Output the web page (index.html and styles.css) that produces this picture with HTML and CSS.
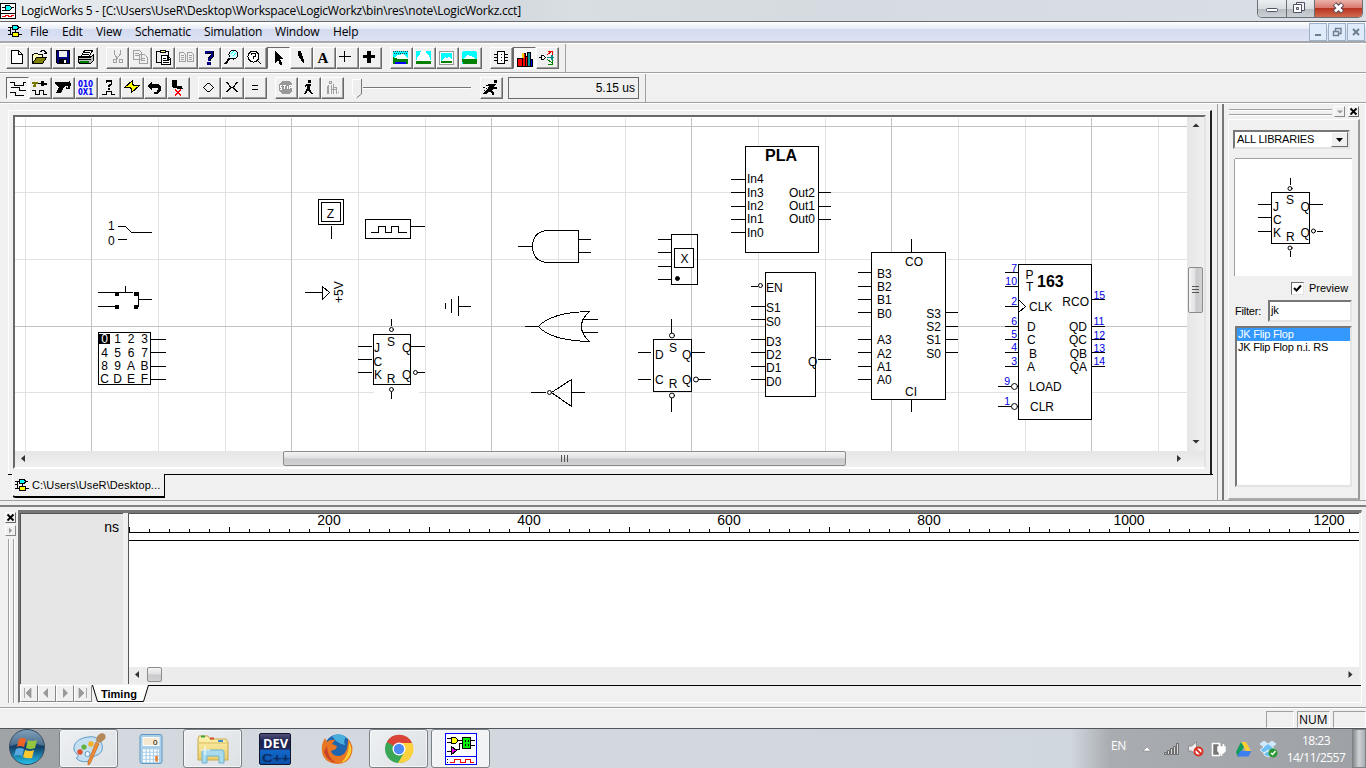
FILE: index.html
```html
<!DOCTYPE html>
<html lang="en">
<head>
<meta charset="utf-8">
<title>LogicWorks 5</title>
<link rel="stylesheet" href="styles.css">
</head>
<body>
<svg class="defs" width="0" height="0">
  <defs>
    <symbol id="gates" viewBox="0 0 14 14">
      <path d="M0 3.500h4M10 3.500h3M0 6.500h3M0 10.500h4M11 10.500h3M2.500 3v8M7.500 6v2" stroke="#000" fill="none"/>
      <path d="M4.500 1.500h4l2 1v2l-2 1h-4z" fill="#0ff" stroke="#000"/>
      <path d="M4.500 8.500h6v4h-6z" fill="#ff0" stroke="#000"/>
    </symbol>
    <linearGradient id="orb" x1="0" y1="0" x2="0" y2="1"><stop offset="0" stop-color="#5c87a8"/><stop offset=".5" stop-color="#123f68"/><stop offset="1" stop-color="#25c5ef"/></linearGradient>
    <linearGradient id="dev" x1="0" y1="0" x2="0" y2="1"><stop offset="0" stop-color="#55557c"/><stop offset=".25" stop-color="#1c2050"/><stop offset=".5" stop-color="#20265a"/><stop offset=".55" stop-color="#1268c8"/><stop offset="1" stop-color="#0a4fa8"/></linearGradient>
    <linearGradient id="folder" x1="0" y1="0" x2="0" y2="1"><stop offset="0" stop-color="#fff3b4"/><stop offset="1" stop-color="#e8cc66"/></linearGradient>
  </defs>
</svg>

<header class="titlebar">
  <svg class="appicon" width="16" height="16" shape-rendering="crispEdges"><path d="M.5.500h15v15h-15z" fill="#fff" stroke="#000"/><path d="M0 10.500h16M2 4.500h12M2 7.500h4" stroke="#000"/><path d="M5.500 2.500h4l2 2v1l-2 2h-4z" fill="#0ff" stroke="#000"/><path d="M2 13.500h3v-1h3v1h3v-1h3" stroke="#e00" fill="none"/></svg>
  <span class="caption">LogicWorks 5 - [C:\Users\UseR\Desktop\Workspace\LogicWorkz\bin\res\note\LogicWorkz.cct]</span>
  <div class="winbtns">
    <span class="wb wmin"><svg width="28" height="16"><rect x="8.500" y="8.500" width="11" height="3" rx="1" fill="#fff" stroke="#4d5265"/></svg></span>
    <span class="wb wmax"><svg width="27" height="16"><path d="M9.500 2.500h8v8h-8z" fill="#f4f4f6" stroke="#4d5265"/><path d="M6.500 4.500h8v8h-8z" fill="#fff" stroke="#4d5265"/><path d="M9.500 7.500h2v2h-2z" fill="#ddd" stroke="#4d5265"/></svg></span>
    <span class="wb wclose"><svg width="47" height="16"><path d="M19.500 4l8 8M27.500 4l-8 8" stroke="#5d4a58" stroke-width="5"/><path d="M20 4.500l7 7M27 4.500l-7 7" stroke="#fff" stroke-width="2.800"/></svg></span>
  </div>
</header>

<nav class="menubar">
  <svg class="mdi" width="14" height="14" shape-rendering="crispEdges"><use href="#gates"/></svg>
  <span class="m1">File</span><span class="m2">Edit</span><span class="m3">View</span><span class="m4">Schematic</span><span class="m5">Simulation</span><span class="m6">Window</span><span class="m7">Help</span>
  <div class="mdibtns">
    <span><svg width="16" height="16"><path d="M5 11h6" stroke="#6f7f92" stroke-width="2"/></svg></span>
    <span><svg width="16" height="16"><path d="M6.500 7v-2.500h5.500v5h-2M4.500 7.500h5v4h-5zM4 7.500h6M6 4.500h6" fill="none" stroke="#6f7f92" stroke-width="1.400"/></svg></span>
    <span><svg width="16" height="16"><path d="M5 5l6 6M11 5l-6 6" stroke="#6f7f92" stroke-width="2"/></svg></span>
  </div>
</nav>

<div class="toolrow">
  <div class="tools t1">
    <div class="grp">
      <span class="b"><svg><path d="M5.500 3.500h7l4 4v9h-11zM12.500 3.500v4h4" fill="#fff" stroke="#000"/></svg></span>
      <span class="b"><svg><path d="M3.500 16.500v-9h1l1-1h3l1 1h4v3" fill="#ffb" stroke="#000"/><path d="M3.500 16.500l4-6h10l-4 6z" fill="#808000" stroke="#000"/><path d="M11 4.500h1l1-1h2l2 2v1M15 6.500h3" fill="none" stroke="#000"/></svg></span>
      <span class="b"><svg><path d="M4.500 3.500h13v13h-12l-1-1z" fill="#000080" stroke="#000"/><path d="M7 4h8v6h-8z" fill="#eee"/><path d="M7 12h8v4h-8z" fill="#000"/><path d="M12 13h2v3h-2z" fill="#fff"/></svg></span>
      <span class="b"><svg><path d="M6.500 9l3-5.500h8l-3 5.500z" fill="#fff" stroke="#000"/><path d="M3.500 9.500h13l2-2v6l-3 3h-11l-1-2z" fill="#bbb" stroke="#000"/><path d="M3 12.500h13M9 5.500h6M8 7.500h6M4 10.500h12" stroke="#000"/><path d="M5 14.500h9" stroke="#008000" stroke-width="2"/></svg></span>
    </div>
    <div class="grp">
      <span class="b"><svg class="dis"><path d="M8.500 3v4l3 5M14.500 3v4l-4 5M7 12.500h3v3h-3zM13 12.500h3v3h-3z"/></svg></span>
      <span class="b"><svg class="dis"><path d="M4.500 3.500h6l2 2v7h-8zM10.500 7.500h5l3 3v6h-8zM6 6.500h4M6 8.500h4M12 11.500h4M12 13.500h4"/></svg></span>
      <span class="b"><svg><path d="M4.500 4.500h12v11h-12z" fill="#eee" stroke="#000"/><path d="M8 5.500v-2h5v2z" fill="#ff8" stroke="#000"/><path d="M9.500 8.500h6l3 3v6h-9zM15 9v3h3M11 11.500h3M11 13.500h6M11 15.500h6" fill="#fff" stroke="#000"/></svg></span>
      <span class="b"><svg class="dis"><path d="M4.500 5.500h4l2 2v7h-6zM12.500 5.500h4l2 2v7h-6zM6 8.500h3M6 10.500h3M6 12.500h3M14 8.500h3M14 10.500h3M14 12.500h3"/></svg></span>
      <span class="b"><svg><path d="M8 7v-2h6v4l-3 3v2" fill="none" stroke="#000" stroke-width="3"/><path d="M8 7v-2h6v4l-3 3v2" fill="none" stroke="#000080" stroke-width="1.500"/><path d="M9 15h4v3h-4z" fill="#000080"/></svg></span>
      <span class="b"><svg><circle cx="12.500" cy="7.500" r="4.500" fill="#cff" stroke="#000"/><path d="M10 7l3-3M12 9l3-3" stroke="#0ff"/><path d="M9 11l-5 6" stroke="#000" stroke-width="2"/></svg></span>
      <span class="b"><svg><circle cx="9.500" cy="9.500" r="5.500" fill="#fff" stroke="#000"/><path d="M7.500 8v-2h4v3l-2 1v2M13 13l4 4M10 14v1" fill="none" stroke="#000"/></svg></span>
      <span class="b on"><svg><path d="M8 4v12l3-3 2 5h2v-2l-2-4h4z"/></svg></span>
      <span class="b"><svg><path d="M8 4h3l3 9v4l-3-4-3-5z"/></svg></span>
      <span class="b"><svg><text x="4.500" y="16" class="aser">A</text></svg></span>
      <span class="b"><svg><path d="M3 9.500h12M8.500 4v11" stroke="#000"/></svg></span>
      <span class="b"><svg><path d="M4 9.500h12M10 4v12" stroke="#000" stroke-width="3.500"/></svg></span>
    </div>
    <div class="grp">
      <span class="b"><svg><path d="M4 4h14v10h-15v-8z" fill="#0ff"/><path d="M3 4.500h15M4 6.500h13" stroke="#345" stroke-dasharray="1 1"/><path d="M4 11l4-3 5-1 5 4v3h-14z" fill="#fff"/><path d="M3 10l5 2h10v5h-15z" fill="#008000"/><path d="M5 15h11v1.500h-11z" fill="#00f"/></svg></span>
      <span class="b"><svg><path d="M3 4h15v13h-15z" fill="#fff"/><path d="M3 4h5l-1 3-2 2-2 5zM13 4h5v10l-2-6-3-2z" fill="#0ff"/><path d="M3 14h15v3h-15z" fill="#008000"/><path d="M6 9h8l2 5h-12z" fill="#fff"/></svg></span>
      <span class="b"><svg><path d="M3.500 4.500h14v13h-14z" fill="#fff" stroke="#999"/><path d="M5 6h11v8h-11z" fill="#0ff"/><path d="M6 13l3-3 2 1 2-1 3 2v3h-11z" fill="#fff"/><path d="M5 14h11v2h-11z" fill="#008000"/></svg></span>
      <span class="b"><svg><path d="M3 5l2-1h11l2 2v11h-15z" fill="#0ff"/><path d="M4 12l5-4 5 2 3 3h-13z" fill="#fff"/><path d="M3 12h15v5h-14z" fill="#008000"/></svg></span>
    </div>
    <div class="grp">
      <span class="b"><svg><path d="M7.500 4.500h7v12h-7zM4 7.500h3M4 10.500h3M4 13.500h3M15 7.500h3M15 10.500h3M15 13.500h3" fill="#fff" stroke="#000"/><path d="M11.500 7v8" stroke="#000" stroke-dasharray="1 2"/></svg></span>
      <span class="b on"><svg><path d="M4 11h5v8h-5zM9 6h3v13h-3z" fill="#f00" stroke="#000"/><path d="M12.500 9h2v10h-2z" fill="#f00" stroke="#000"/><path d="M9 6h2v5h-2z" fill="#fc0"/><path d="M14 5h3v14h-3z" fill="#099" stroke="#000"/><path d="M17 12h2v7h-2z" fill="#00f" stroke="#000"/></svg></span>
      <span class="b"><svg><path d="M3 10.500h2M5.500 8.500h2l2 2-2 2h-2z" fill="#fff" stroke="#000"/><path d="M11 8l5-4M12 4.500h4v3" stroke="#e00" fill="none"/><path d="M11 10.500h7M16 8v5" stroke="#088" stroke-width="1.500"/><path d="M11 12l5 4M16 13v4h-4" stroke="#080" fill="none"/></svg></span>
    </div>
  </div>
</div>
<div class="toolrow">
  <div class="tools t2">
    <div class="grp">
      <span class="b on"><svg><path d="M4 5.500h4v3h9v-3h3M5 10.500h8v3h7M4 15.500h5v3h9" stroke="#000" fill="none"/></svg></span>
      <span class="b"><svg><path d="M3 5.500h6M5.500 5v4M4 8.500h3" stroke="#770" stroke-width="2"/><path d="M9 6.500h4M3 13.500h3v4h4v-4h4v4h4" stroke="#000" fill="none"/><path d="M12 4h3v2h3v2h-3v1h-3z"/></svg></span>
      <span class="b"><svg><path d="M3 5h12l3-1 1 3v2h-1v3h-4v-3l-2 1-3 6h-5l3-6-4-3z"/><path d="M13 9.500h3M15.500 9v2" stroke="#fff" stroke-width=".8"/></svg></span>
      <span class="b"><svg class="bits"><text x="3" y="10" textLength="15" lengthAdjust="spacingAndGlyphs">010</text><text x="3" y="18" textLength="15" lengthAdjust="spacingAndGlyphs">0X1</text></svg></span>
      <span class="b"><svg><path d="M8.500 6v-2h5v3l-2.500 2v1M11 11v2" fill="none" stroke="#000" stroke-width="1.700"/><path d="M4 17.500h4v-3h5v3h4" fill="none" stroke="#000"/></svg></span>
      <span class="b"><svg><path d="M11.500 3.500l-8 7h5l2 1v4l8-7h-5l-2-1z" fill="#ff0" stroke="#000"/></svg></span>
      <span class="b"><svg><path d="M8 4v3h6l3 3v3l-3 4h-4v-2h3l1-3-1-1h-5v3l-5-5z"/></svg></span>
      <span class="b"><svg><path d="M5 3h5v6h5l1 3h-4l-5-1-2-1z"/><path d="M8 13l6 5M14 13l-6 5" stroke="#f00" stroke-width="1.500"/></svg></span>
    </div>
    <div class="grp">
      <span class="b"><svg><path d="M5.500 10.500l4-4h2l4 4-4 4h-2z" fill="none" stroke="#000" stroke-width="1.300"/></svg></span>
      <span class="b"><svg><path d="M5 5.500h1l4 5-4 4h-1M17 5.500h-1l-4 5 4 4h1M10 10.500h2" fill="none" stroke="#000" stroke-width="1.300"/></svg></span>
      <span class="b"><svg><path d="M8 8.500h6M8 12.500h6" stroke="#000"/></svg></span>
    </div>
    <div class="grp">
      <span class="b"><svg><path d="M7 4h7l3 3v7l-3 3h-7l-3-3v-7z" fill="#999"/><path d="M5 8.500h2M5.500 8v2h1v2h-2M8 8.500h3M9.500 8v4M12.500 8.500v3M14.500 12v-3.500h2v2h-2" fill="none" stroke="#fff"/></svg></span>
      <span class="b"><svg><path d="M10 3h3v3h-3zM9 7h4l-1 5 3 5h-2l-3-4-2 4h-2l3-6v-3l-2 2v-2z"/></svg></span>
      <span class="b"><svg class="dis"><path d="M8 4h2v2h-2zM7.500 8v9M6 9v8M10 8v9M12.500 7v10M12 10h3v7M17 15h1M10 12h5"/></svg></span>
    </div>
    <svg class="slider" width="120" height="22"><path d="M11 9.500h108" stroke="#777"/><path d="M11 10.500h108" stroke="#fff"/><path d="M.5 1.500h9v15l-5 3.500-4-4z" fill="#eee" stroke="#fff"/><path d="M9.500 1v15l-5 4" fill="none" stroke="#777"/></svg>
    <span class="b"><svg><path d="M14 3h3v3h-3zM9 7h7l-2 3h3v2h-4l-1 2 2 1v3h-2v-2l-3-1-3 2h-3v-1l4-3 2-4h-3v-1zM3 10h2v1h-2zM6 11h1v1h-1zM4 13h1v1h-1z"/></svg></span>
    <div class="time"><span>5.15 us</span></div>
  </div>
</div>

<main class="work">
  <section class="docarea">
    <div class="docframe">
      <div class="docinner">
        <div class="drawrow">
          <svg class="canvas" width="1172" height="334" viewBox="15 117 1172 334">
            <g class="crisp" transform="translate(.5 .5)">
              <path class="g1" d="M25 117v334M158 117v334M225 117v334M358 117v334M425 117v334M558 117v334M625 117v334M758 117v334M825 117v334M958 117v334M1025 117v334M1158 117v334M14 192h1173M14 259h1173M14 392h1173"/>
              <path class="g2" d="M91 117v334M291 117v334M491 117v334M691 117v334M891 117v334M1091 117v334M14 126h1173M14 326h1173"/>
              <path d="M373 384h45v11h-45z" fill="#fff"/>
              <g class="k">
                <path d="M118 226h7l6 6h20M118 239h8M98 292h17M98 306h17M119 292h13M125 286v6M134 292h4v14h-4M138 299h13"/>
                <path class="sq" d="M114 291h4v4h-4zM133 291h4v4h-4zM114 304h4v4h-4zM133 304h4v4h-4z"/>
                <path d="M98 332h52v52h-52z" fill="#fff"/><path d="M150 339h15M150 352h15M150 366h15M150 379h15"/><path d="M99 334h10v9h-10z" fill="#000"/>
                <path d="M318 199h25v25h-25zM321 202h19v19h-19z" fill="#fff"/><path d="M331 226v12"/>
                <path d="M365 219h45v19h-45z" fill="#fff"/><path d="M371 232h7v-6h7v6h6v-6h7v6h8M411 226h13"/>
                <path d="M305 292h17M322 286v13l7-7z"/>
                <path d="M373 334h37v50h-37z" fill="#fff"/><path d="M358 346h13M358 359h13M358 372h13M411 346h13M417 372h7M391 319v6M391 392v6"/>
                <circle cx="391" cy="329" r="2"/><circle cx="415" cy="372" r="2"/><circle cx="391" cy="389" r="2"/>
                <path d="M445 303v5M451 299v13M458 296v19M458 306h12"/>
                <path d="M518 246h13M578 230h-32q-14 2-14 16q0 14 14 16h32zM579 239h11M579 252h11"/>
                <path d="M525 326h13q12-14 51-15-8 7-8 15t8 15q-39-1-51-15M582 319h15M582 332h15"/>
                <path d="M531 392h14M551 392l20-13v27zM571 392h13"/><circle cx="549" cy="392" r="2"/>
                <path d="M671 234h26v50h-26z"/><path d="M674 248h19v19h-19z" fill="#fff"/><path d="M658 239h13M658 252h13M658 266h13M658 279h13"/><circle cx="677" cy="278" r="2" class="dot"/>
                <path d="M653 339h38v52h-38z" fill="#fff"/><path d="M638 352h12M638 379h12M692 352h12M699 379h11M671 319v13M671 398v13"/><circle cx="671.500" cy="335" r="2.500"/><circle cx="695.500" cy="379" r="2.500"/><circle cx="671.500" cy="395" r="2.500"/>
                <path d="M745 146h73v106h-73z" fill="#fff"/><path d="M731 179h14M731 192h14M731 206h14M731 219h14M731 232h14M819 192h11M819 206h11M819 219h11"/>
                <path d="M765 272h50v124h-50z" fill="#fff"/><path d="M751 286h6M751 306h14M751 319h14M751 339h14M751 352h14M751 366h14M751 379h14M818 359h12"/><circle cx="760" cy="285" r="2"/>
                <path d="M871 252h74v147h-74z" fill="#fff"/><path d="M911 239v13M911 399v12M858 272h13M858 286h13M858 299h13M858 312h13M858 339h13M858 352h13M858 366h13M858 379h13M946 312h11M946 326h11M946 339h11M946 352h11"/>
                <path d="M1018 264h73v155h-73z" fill="#fff"/><path d="M1005 272h13M1005 286h13M1005 306h13M1005 326h13M1005 339h13M1005 352h13M1005 366h13M998 386h12M998 406h12M1092 299h12M1092 326h12M1092 339h12M1092 352h12M1092 366h12M1018 299l7 7-7 6"/>
                <circle cx="1014" cy="386" r="3"/><circle cx="1014" cy="406" r="3"/>
              </g>
            </g>
            <g class="lbl">
              <text x="108" y="230">1</text><text x="108" y="245">0</text>
              <g class="mid"><text x="104.500" y="343" fill="#fff">0</text><text x="117.500" y="343">1</text><text x="131" y="343">2</text><text x="144.500" y="343">3</text>
              <text x="104.500" y="357">4</text><text x="117.500" y="357">5</text><text x="131" y="357">6</text><text x="144.500" y="357">7</text>
              <text x="104.500" y="370">8</text><text x="117.500" y="370">9</text><text x="131" y="370">A</text><text x="144.500" y="370">B</text>
              <text x="104.500" y="383">C</text><text x="117.500" y="383">D</text><text x="131" y="383">E</text><text x="144.500" y="383">F</text>
              <text x="330.500" y="218">Z</text><text x="684.500" y="263">X</text>
              <text x="391" y="346">S</text><text x="391" y="383">R</text><text x="673" y="352">S</text><text x="673" y="388">R</text>
              <text x="914" y="266">CO</text><text x="911" y="396">CI</text></g>
              <text transform="translate(343 303) rotate(-90)">+5V</text>
              <text x="374" y="352">J</text><text x="373.500" y="366">C</text><text x="374" y="379">K</text><text x="402" y="352">Q</text><text x="402" y="379">Q</text>
              <text x="655" y="359">D</text><text x="655" y="384">C</text><text x="682" y="359">Q</text><text x="682" y="384">Q</text>
              <text class="big" x="765" y="161" textLength="32">PLA</text>
              <text x="747" y="183">In4</text><text x="747" y="197">In3</text><text x="747" y="210">In2</text><text x="747" y="223">In1</text><text x="747" y="237">In0</text>
              <g class="end"><text x="815" y="197">Out2</text><text x="815" y="210">Out1</text><text x="815" y="223">Out0</text>
              <text x="941" y="318">S3</text><text x="941" y="331">S2</text><text x="941" y="344">S1</text><text x="941" y="358">S0</text>
              <text x="1089" y="306">RCO</text><text x="1087" y="331">QD</text><text x="1087" y="344">QC</text><text x="1087" y="358">QB</text><text x="1087" y="371">QA</text></g>
              <text x="766" y="292">EN</text><text x="766" y="312">S1</text><text x="766" y="326">S0</text><text x="766" y="346">D3</text><text x="766" y="359">D2</text><text x="766" y="372">D1</text><text x="766" y="386">D0</text><text x="808" y="366">Q</text>
              <text x="877" y="278">B3</text><text x="877" y="291">B2</text><text x="877" y="304">B1</text><text x="877" y="318">B0</text>
              <text x="877" y="344">A3</text><text x="877" y="358">A2</text><text x="877" y="371">A1</text><text x="877" y="384">A0</text>
              <text x="1025.500" y="279">P</text><text x="1026" y="291">T</text><text class="big" x="1037" y="287">163</text>
              <text x="1029" y="311">CLK</text><text x="1027" y="331">D</text><text x="1027" y="344">C</text><text x="1029" y="358">B</text><text x="1027" y="371">A</text><text x="1029" y="391">LOAD</text><text x="1030" y="411">CLR</text>
            </g>
            <g class="pins">
              <g class="end"><text x="1017" y="272">7</text><text x="1017" y="285">10</text><text x="1017" y="305">2</text><text x="1017" y="325">6</text><text x="1017" y="338">5</text><text x="1017" y="351">4</text><text x="1017" y="365">3</text><text x="1010" y="385">9</text><text x="1010" y="405">1</text></g>
              <text x="1093.500" y="299">15</text><text x="1093.500" y="325">11</text><text x="1093.500" y="339">12</text><text x="1093.500" y="352">13</text><text x="1093.500" y="365">14</text>
            </g>
          </svg>
          <div class="vscroll">
            <svg width="17" height="334"><path d="M5.500 10l3.500-3.500 3.500 3.500z" fill="#333"/><path d="M5.500 323l3.500 3.500 3.500-3.500z" fill="#333"/></svg>
            <div class="vthumb"><i></i><i></i><i></i></div>
          </div>
        </div>
        <div class="hscroll">
          <svg width="1189" height="16"><path d="M10 4v7l-4-3.500z" fill="#333"/><path d="M1162 4v7l4-3.500z" fill="#333"/></svg>
          <div class="hthumb"><i></i><i></i><i></i></div>
        </div>
      </div>
    </div>
    <div class="doctabs">
      <span class="stub"></span>
      <div class="doctab"><svg width="14" height="14" shape-rendering="crispEdges"><use href="#gates"/></svg><span>C:\Users\UseR\Desktop...</span></div>
      <span class="tabline"></span>
    </div>
  </section>
  <div class="split"></div>
  <aside class="lib">
    <div class="grip"><span class="lines"></span><span class="sb"><svg width="10" height="9"><path d="M2 3.500h6l-3 3z" fill="#999"/></svg></span><span class="sb dark"><svg width="10" height="9"><path d="M1.500 1.500l6 6M7.500 1.500l-6 6" stroke="#000" stroke-width="1.800"/></svg></span></div>
    <div class="libbody">
      <div class="combo"><span>ALL LIBRARIES</span><i><svg width="15" height="14"><path d="M4 5h7l-3.500 4z"/></svg></i></div>
      <svg class="preview" width="117" height="117" viewBox="1235 158 117 117">
        <g class="k crisp" transform="translate(.5 .5)">
          <path d="M1271 191h38v51h-38zM1258 203h13M1258 216h13M1258 230h13M1310 203h12M1317 230h5M1290 177v6M1290 250v5"/>
          <circle cx="1289.500" cy="187" r="2"/><circle cx="1313" cy="229.500" r="2"/><circle cx="1289.500" cy="246.500" r="2"/>
        </g>
        <g class="lbl"><text x="1286" y="203">S</text><text x="1273" y="210">J</text><text x="1300.500" y="210">Q</text><text x="1273" y="223">C</text><text x="1273" y="236">K</text><text x="1286" y="240">R</text><text x="1300.500" y="236">Q</text></g>
      </svg>
      <div class="check"><i><svg width="11" height="11"><path d="M2 5l2.500 2.500 4.500-5" fill="none" stroke="#000" stroke-width="2"/></svg></i><span>Preview</span></div>
      <div class="filter"><label>Filter:</label><div class="inp">jk</div></div>
      <div class="list"><div class="sel">JK Flip Flop</div><div>JK Flip Flop n.i. RS</div></div>
    </div>
  </aside>
</main>

<section class="dock">
  <div class="dockgrip">
    <span class="sb dark"><svg width="9" height="9"><path d="M1.500 1.500l6 6M7.500 1.500l-6 6" stroke="#000" stroke-width="1.800"/></svg></span>
    <span class="sb"><svg width="9" height="9"><path d="M3 1.500v6l3-3z" fill="#999"/></svg></span>
    <span class="vlines"></span>
  </div>
  <div class="timing">
    <div class="trow">
      <div class="names">ns</div>
      <div class="wave">
        <svg class="ruler" width="1230" height="153" viewBox="129 514 1230 153">
          <path class="crisp" stroke="#000" d="M129 532.500h1230M129 540.500h1230"/>
          <path class="crisp" stroke="#000" stroke-dasharray="1 19" stroke-width="3" d="M129 530.500h1230"/>
          <path class="crisp" stroke="#000" stroke-dasharray="1 99" stroke-width="5" d="M129 529.500h1230"/>
          <g><text x="329" y="525">200</text><text x="529" y="525">400</text><text x="729" y="525">600</text><text x="929" y="525">800</text><text x="1129" y="525">1000</text><text x="1329" y="525">1200</text></g>
        </svg>
        <div class="tscroll"><svg width="1230" height="16"><path d="M10 4v7l-4-3.500z" fill="#333"/><path d="M1219.500 4v7l4-3.500z" fill="#333"/></svg><div class="tthumb"></div></div>
      </div>
    </div>
    <div class="sheets">
      <span class="nb"><svg width="16" height="14"><path d="M3.500 2v10M10 2v10l-5-5z" fill="#999" stroke="#999" stroke-width=".8"/></svg></span>
      <span class="nb"><svg width="16" height="14"><path d="M9 2v10l-5-5z" fill="#999"/></svg></span>
      <span class="nb"><svg width="16" height="14"><path d="M6 2v10l5-5z" fill="#999"/></svg></span>
      <span class="nb"><svg width="16" height="14"><path d="M4 2v10l5-5zM11.500 2v10" fill="#999" stroke="#999" stroke-width=".8"/></svg></span>
      <div class="sheet"><svg width="60" height="17"><path d="M.5 0l5 16.500h46l5-16.500" fill="#fff" stroke="#000"/></svg><b>Timing</b></div>
      <span class="sheetline"></span>
    </div>
  </div>
</section>

<div class="status"><span class="p1"></span><span class="p2">NUM</span><span class="p3"></span></div>

<footer class="taskbar">
  <div class="start"><svg width="38" height="38"><circle cx="19" cy="18" r="17.500" fill="url(#orb)" stroke="#34495c"/><path d="M2 17a17 16 0 0 1 34 0q-17-7-34 0z" fill="#fff" opacity=".22"/><path d="M11 10q4-2 7 0l-2 8q-4-2-7 0z" fill="#ee6427"/><path d="M20 11q4 2 9 0l-2 8q-5 2-9 0z" fill="#93c541"/><path d="M8 20q4-2 8 0l-2 7q-4-2-8 0z" fill="#58a8df"/><path d="M17 21q5 2 9 0l-2 8q-5 1-9-1z" fill="#fbc72e"/></svg></div>
  <div class="tb act"><svg width="34" height="34"><path d="M16 5c10-2 16 6 14 13-2 6-8 5-10 8-3 5-11 5-16 0 5-1 0-4-2-8C1 10 8 6 16 5z" fill="#c5def0" stroke="#5d9cc5"/><circle cx="8" cy="20" r="2.700" fill="#e34d31"/><circle cx="12" cy="15" r="2.600" fill="#63b13c"/><circle cx="19" cy="12" r="2.800" fill="#f6b12a"/><circle cx="15.500" cy="22" r="2.500" fill="#eef6fb" stroke="#5d9cc5"/><path d="M27 12l-9 20-2 1 0-3 8-20z" fill="#ee8b33" stroke="#b8601a" stroke-width=".6"/><path d="M24 9q0-6 6-8 5 1 3 6-3 3-6 4z" fill="#b5885a"/></svg></div>
  <div class="tb"><svg width="34" height="34"><rect x="6" y="2.500" width="22" height="29" rx="2" fill="#a9cfe9" stroke="#5e97c4"/><rect x="9" y="5.500" width="16" height="8" fill="#f5e8cf" stroke="#fff"/><text x="19" y="12.500" font-size="8">0</text><g fill="none" stroke="#fff" stroke-width="2.500" stroke-dasharray="2.500 1.200"><path d="M9 18.500h16M9 22h16M9 25.500h16M9 29h16"/></g><path d="M22.500 24v5.500" stroke="#e97b26" stroke-width="2.500"/></svg></div>
  <div class="tb act"><svg width="34" height="34"><path d="M2 28v-21l1-3h9l2 3h16l2 3v18z" fill="url(#folder)" stroke="#c8a84c"/><path d="M3 11h28" stroke="#d9bd60"/><path d="M5 4.500h4" stroke="#3ba13b" stroke-width="2"/><path d="M14 6.500h4" stroke="#d34f2a" stroke-width="2"/><path d="M22 9h5" stroke="#3c8fd0" stroke-width="2"/><path d="M6 31v-11q0-2 2-2h18q2 0 2 2v11h-5v-7h-12v7z" fill="#a9dbee" stroke="#6db4d3"/><path d="M9 14v9M5 18h9" stroke="#fff"/></svg></div>
  <div class="tb"><svg width="34" height="34"><rect x="1.500" y="1.500" width="31" height="31" rx="1.500" fill="url(#dev)" stroke="#10152f"/><text class="devt" x="5" y="16" textLength="25" lengthAdjust="spacingAndGlyphs">DEV</text><text class="devc" x="4" y="30" textLength="28" lengthAdjust="spacingAndGlyphs">C++</text></svg></div>
  <div class="tb"><svg width="34" height="34"><circle cx="18" cy="16" r="13.500" fill="#1f65ad"/><path d="M12 4q8-4 14 1-3 4-1 8-8-1-13-9z" fill="#48aede"/><path d="M28 7q6 6 4 14-3 11-15 11Q4 31 2 20 1 12 5 6l2 4q3-3 8-2l-3 4 5 2-1 3-5 2q1 5 8 5 9-1 9-17z" fill="#e77522"/><path d="M29 10q4 7 1 13-3 6-9 8 8-7 8-21z" fill="#fbd030"/><path d="M4 20q3 9 12 11-9-6-9-17z" fill="#c8422b"/></svg></div>
  <div class="tb act"><svg width="34" height="34"><circle cx="17" cy="17" r="14" fill="#3aa757"/><path d="M17 17L4.900 10A14 14 0 0 1 30 11H17z" fill="#dc4437"/><path d="M17 11h13A14 14 0 0 1 16 31l6.500-11z" fill="#fed23c"/><circle cx="17" cy="17" r="6.500" fill="#fff"/><circle cx="17" cy="17" r="5.200" fill="#4c8bf5"/></svg></div>
  <div class="tb act cur"><svg width="34" height="34" shape-rendering="crispEdges"><path d="M1.500 1.500h31v31h-31zM1 24.500h32" fill="#fff" stroke="#00f"/><path d="M3 6.500h4M3 10.500h4M12 8.500h7M3 19.500h4M12 17.500h3v-6h5M25 8.500h6M25 13.500h6" stroke="#000" fill="none"/><path d="M7.500 5.500h4l2 2v2l-2 2h-4z" fill="#ff0" stroke="#000"/><path d="M7.500 14.500l5 4-5 4z" fill="#f0f" stroke="#000"/><path d="M18.500 5.500h8v11h-8z" fill="#0e0" stroke="#000"/><path d="M21 8v2M24 8v2M21 12v2M24 12v2" stroke="#000"/><path d="M6 30.500h4v-3h6v3h5v-3h5v3h4" stroke="#e00" fill="none"/><path d="M3 27v4" stroke="#000" stroke-dasharray="1 2"/></svg></div>
  <div class="tray">
    <span class="en">EN</span>
    <svg class="trayicons" width="140" height="22">
      <path d="M2 13l4-4 4 4z" fill="#fff" stroke="#777" stroke-width=".5"/>
      <g fill="#ddd" stroke="#555" stroke-width=".8"><path d="M23.500 14.500h2v2h-2zM26.500 12.500h2v4h-2zM29.500 10.500h2v6h-2zM32.500 8.500h2v8h-2zM35.500 5.500h2v11h-2z"/></g>
      <path d="M47.500 8h3l5-4v13l-5-4h-3z" fill="#eee" stroke="#777" stroke-width=".7"/><circle cx="57.500" cy="13.500" r="4" fill="#fff" stroke="#d93025" stroke-width="2"/><path d="M55 11l5 5" stroke="#d93025" stroke-width="2"/>
      <path d="M71.500 5.500h7v12h-7z" fill="#777" stroke="#fff" stroke-width="1.500"/><path d="M77 9h7v4l-2 2h-3l-2-2zM78.500 6v3M82.500 6v3M80.500 15v3" fill="#fff" stroke="#fff" stroke-width="1.500"/>
      <path d="M100 4h5l5 9h-5z" fill="#fccd34"/><path d="M100 4l3 5-6 10-2-5z" fill="#119c5a"/><path d="M99 13h11.500l-3 5.500h-11z" fill="#3d7ef0"/>
      <path d="M119 6l4-3 4 3 4-3 4 3-4 3 4 3-4 3-4-3-4 3-4-3 4-3zM123 15l4-2 4 2v2l-4 2-4-2z" fill="#6fc0f2" stroke="#fff" stroke-width=".7"/><path d="M119 6l4-3 4 3-4 3zM127 6l4-3 4 3-4 3z" fill="#cfeafc"/><circle cx="132" cy="15" r="4.500" fill="#299a32"/><path d="M130 15l1.500 1.500 3-3.500" stroke="#fff" stroke-width="1.400" fill="none"/>
    </svg>
    <div class="clock"><span>18:23</span><span>14/11/2557</span></div>
    <span class="peek"></span>
  </div>
</footer>
</body>
</html>
```

FILE: styles.css
```css
* { box-sizing: border-box; }
body { margin: 0; width: 1366px; height: 768px; overflow: hidden; display: flex; flex-direction: column; background: #f0f0f0; color: #000; font: 11px/13px "Liberation Sans", sans-serif; }
svg { display: block; flex: none; }
.defs { position: absolute; }

.titlebar { height: 22px; flex: none; display: flex; align-items: flex-start; background: linear-gradient(90deg, #eceff2, #dfe3e7 12%, #d2d8de 36%, #d9dee2 42%, #d5dbe0 60%, #d9dfe4); border-bottom: 1px solid #666a6e; font: 12px/20px "Open Sans", sans-serif; }
.appicon { margin-top: 3px; }
.caption { margin: 1px 0 0 5px; white-space: nowrap; letter-spacing: -.21px; }
.winbtns { margin-left: auto; margin-right: 3px; display: flex; height: 18px; border: 1px solid #6b7077; border-top: 0; border-radius: 0 0 5px 5px; overflow: hidden; }
.wb { background: linear-gradient(#eceef0, #d9dde0 50%, #b7bcc2 51%, #ccd1d6); border-right: 1px solid #6b7077; height: 17px; }
.wclose { border: 0; background: linear-gradient(#eab3a8, #d9766a 48%, #b83420 50%, #cf6a4d); }

.menubar { height: 21px; flex: none; display: flex; background: linear-gradient(#fff, #e9ecf6 35%, #d5dbef 38%, #dde3f5); border-bottom: 2px solid #a8a8aa; font: 12px/20px "Open Sans", sans-serif; letter-spacing: -.15px; }
.mdi { margin: 2px 8px 0 8px; }
.m1 { width: 32px; } .m2 { width: 34px; } .m3 { width: 39px; } .m4 { width: 69px; } .m5 { width: 71px; } .m6 { width: 58px; }
.mdibtns { margin-left: auto; margin-right: 1px; display: flex; gap: 1px; }
.mdibtns span { width: 18px; height: 18px; margin-top: 1px; border: 1px solid #9db2c7; background: #dfeafa; }

.toolrow { height: 30px; flex: none; border-bottom: 1px solid #a0a0a0; display: flex; border-top: 1px solid #fff; }
.tools { display: flex; gap: 8px; padding: 3px 0 0 6px; border-right: 1px solid #a0a0a0; height: 29px; }
.t1 { width: 566px; } .t2 { width: 646px; }
.grp { display: flex; }
.b { width: 23px; height: 22px; background: #f0f0f0; border: 1px solid; border-color: #fff #696969 #696969 #fff; box-shadow: inset -1px -1px #a0a0a0; overflow: hidden; flex: none; }
.b svg { width: 22px; height: 21px; margin: -1px 0 0 -1px; shape-rendering: crispEdges; }
.b.on { background: repeating-conic-gradient(#fff 0 25%, #f0f0f0 0 50%) 0 0/2px 2px; border-color: #696969 #fff #fff #696969; box-shadow: none; }
.dis { fill: none; stroke: #a0a0a0; }
.aser { font: bold 15px "Liberation Serif", serif; }
.bits text { font: bold 8px "DejaVu Sans", sans-serif; fill: #00f; }
.slider { margin: 1px 0 0 0; }
.time { width: 131px; height: 22px; border: 1px solid #696969; padding: 0 3px; margin-left: -3px; text-align: right; font-size: 12px; line-height: 20px; }

.work { height: 397px; flex: none; display: flex; border-top: 1px solid #fff; }
.docarea { width: 1217px; padding: 6px 5px 0 8px; }
.docframe { height: 364px; border-top: 1px solid #fff; border-left: 1px solid #fff; border-right: 2px solid #222; padding: 4px 4px 0 4px; }
.docinner { border: 2px solid; border-color: #696969 #e3e3e3 #fff #696969; height: 354px; }
.drawrow { display: flex; height: 334px; }
.canvas { background: #fff; }
.crisp { shape-rendering: crispEdges; }
.g1 { stroke: #e2e2e2; } .g2 { stroke: #c2c2c2; }
.k { stroke: #000; fill: none; stroke-linecap: square; }
.k circle { shape-rendering: geometricPrecision; fill: #fff; }
.k .dot { fill: #000; }
.k .sq { fill: #000; stroke: none; }
.lbl { font: 12px "Liberation Sans", sans-serif; }
.mid { text-anchor: middle; } .end { text-anchor: end; }
.lbl .big { font-weight: bold; font-size: 16px; }
.pins { font: 10.500px "Liberation Sans", sans-serif; fill: #0000e8; }
.vscroll { width: 17px; background: linear-gradient(90deg, #e6e6e6, #f0f0f0); position: relative; }
.vthumb { position: absolute; left: 1px; top: 150px; width: 15px; height: 46px; border: 1px solid #8c8c8c; border-radius: 2px; background: linear-gradient(90deg, #f4f4f4, #e0e0e0 48%, #c9c9cc 52%, #d2d2d4); padding: 18px 3px 0; }
.vthumb i { display: block; height: 1px; background: #555; margin-bottom: 2px; }
.hscroll { height: 16px; background: linear-gradient(#e6e6e6, #f0f0f0); position: relative; }
.hthumb { position: absolute; left: 268px; top: 0; width: 563px; height: 15px; border: 1px solid #8c8c8c; border-radius: 2px; background: linear-gradient(#f4f4f4, #e0e0e0 48%, #c9c9cc 52%, #d2d2d4); display: flex; justify-content: center; gap: 2px; padding-top: 3px; }
.hthumb i { width: 1px; height: 7px; background: #555; }
.doctabs { display: flex; height: 26px; margin-right: -1px; }
.stub { width: 4px; border-top: 1px solid #000; }
.doctab { width: 153px; height: 24px; border: 2px solid #000; border-width: 0 1px 2px 1px; border-left-color: #fff; border-radius: 0 0 0 4px; display: flex; align-items: center; gap: 3px; padding-left: 2px; }
.doctab span { white-space: nowrap; letter-spacing: .1px; }
.tabline { width: 1048px; border-top: 1px solid #000; }
.split { width: 7px; border-left: 1px solid #a0a0a0; border-right: 2px solid #777; background: #f0f0f0; }
.lib { width: 142px; padding: 1px 5px 0 4px; border-right: 1px solid #fff; }
.grip { height: 13px; display: flex; align-items: center; gap: 2px; margin-bottom: 1px; }
.grip .dark { margin-left: 1px; }
.lines { width: 103px; height: 6px; border: 1px solid #a0a0a0; border-width: 1px 0; box-shadow: 0 1px #fff, inset 0 1px #fff; margin-left: 1px; }
.sb { width: 11px; height: 11px; border: 1px solid; border-color: #fff #888 #888 #fff; overflow: hidden; flex: none; }
.sb.dark { border-color: #fff #696969 #696969 #fff; }
.libbody { height: 381px; border: 1px solid #fff; border-right: 2px solid #999; border-bottom: 2px solid #aaa; padding: 10px 0 0 4px; }
.combo { width: 117px; height: 19px; background: #fff; border: 2px solid; border-color: #777 #e3e3e3 #e3e3e3 #777; display: flex; justify-content: space-between; line-height: 15px; padding-left: 2px; white-space: nowrap; font-size: 11px; letter-spacing: -.2px; }
.combo i { width: 17px; height: 15px; background: #f0f0f0; border: 1px solid; border-color: #fff #696969 #696969 #fff; }
.preview { background: #fff; box-shadow: 0 -1px #a0a0a0, -1px 0 #a0a0a0; margin: 10px 0 0 2px; }
.check { display: flex; gap: 5px; margin: 6px 0 0 58px; align-items: center; height: 13px; }
.check i { width: 13px; height: 13px; background: #fff; border: 1px solid; border-color: #696969 #e3e3e3 #e3e3e3 #696969; }
.filter { display: flex; margin: 5px 0 0 2px; height: 22px; align-items: center; letter-spacing: -.2px; }
.filter label { width: 33px; }
.inp { width: 84px; height: 22px; background: #fff; border: 2px solid; border-color: #777 #e3e3e3 #e3e3e3 #777; padding: 2px 1px; }
.list { margin: 4px 0 0 2px; width: 117px; height: 161px; background: #fff; border: 2px solid; border-color: #777 #e3e3e3 #e3e3e3 #777; line-height: 13px; letter-spacing: -.2px; }
.list div { padding-left: 1px; white-space: nowrap; }
.sel { background: #39f; color: #fff; }

.dock { height: 207px; flex: none; display: flex; border-top: 1px solid #a0a0a0; padding-top: 9px; box-shadow: inset 0 4px #f0f0f0, inset 0 6px #808080; }
.dockgrip { width: 18px; padding: 2px 0 0 5px; display: flex; flex-direction: column; gap: 2px; }
.vlines { width: 6px; height: 164px; margin: 1px 0 0 3px; border: 1px solid #a0a0a0; border-width: 0 1px; box-shadow: 1px 0 #fff, inset 1px 0 #fff; }
.timing { width: 1344px; height: 193px; border-left: 2px solid #777; border-top: 3px solid #777; border-right: 1px solid #fff; border-bottom: 1px solid #fff; }
.trow { display: flex; height: 171px; }
.names { width: 103px; height: 171px; background: #e6e6e6; border-left: 1px solid #555; border-top: 1px solid #555; font-size: 14px; line-height: 16px; text-align: right; padding: 5px 4px 0 0; }
.wave { margin-left: 5px; border-left: 1px solid #555; border-top: 1px solid #555; }
.ruler { background: #fff; font: 14px/14px "Liberation Sans", sans-serif; height: 153px; overflow: visible; }
.ruler g { text-anchor: middle; }
.tscroll { height: 16px; background: #ececec; position: relative; }
.tthumb { position: absolute; left: 18px; top: 0; width: 15px; height: 15px; border: 1px solid #8c8c8c; border-radius: 2px; background: linear-gradient(#f4f4f4, #e0e0e0 48%, #c9c9cc 52%, #d2d2d4); }
.sheets { display: flex; height: 17px; margin-top: 1px; }
.nb { width: 18px; height: 17px; border: 1px solid; border-color: #fff #888 #888 #fff; }
.sheet { position: relative; width: 56px; height: 17px; }
.sheet b { position: absolute; left: 9px; top: 3px; }
.sheetline { flex: 1; border-top: 1px solid #000; }

.status { height: 21px; flex: none; border-top: 1px solid #a0a0a0; box-shadow: inset 0 1px #fff; display: flex; justify-content: flex-end; padding-top: 3px; gap: 3px; font: 12px/16px "Open Sans", sans-serif; }
.status span { height: 17px; border: 1px solid; border-color: #a0a0a0 #fff #fff #a0a0a0; }
.p1 { width: 28px; } .p2 { width: 33px; padding-left: 1px; } .p3 { width: 33px; }

.taskbar { height: 40px; flex: none; display: flex; border-top: 1px solid #50565c; background: linear-gradient(90deg, #a0a4a7 0 59px, #d3d9df 60px, #d0d7dd 1070px, #a9adb1 1110px, #9da1a5); }
.start { width: 59px; padding-left: 8px; }
.tb { width: 59px; margin-right: 3px; height: 39px; padding: 2px 0 0 12px; border: 1px solid transparent; }
.tb.act { border: 1px solid #7c8186; border-radius: 3px; background: linear-gradient(135deg, #eef0f2, #dde1e5); box-shadow: inset 0 0 0 1px #f4f6f8; }
.tb.cur { background: #f1f3f5; }
.devt { font: bold 12px/12px "Open Sans", sans-serif; fill: #fff; }
.devc { font: bold 11px/11px "Liberation Sans", sans-serif; fill: #0a2c60; }
.tray { margin-left: auto; display: flex; color: #fff; font: 12px/17px "Open Sans", sans-serif; }
.en { margin: 8px 15px 0 0; letter-spacing: -.3px; }
.trayicons { margin-top: 9px; }
.clock { width: 62px; margin: 3px 5px 0 4px; display: flex; flex-direction: column; align-items: center; white-space: nowrap; letter-spacing: -.5px; }
.peek { width: 14px; border: 1px solid #7d8286; background: linear-gradient(90deg, #85898d, #d0d3d6 50%, #a9adb1); }
```
